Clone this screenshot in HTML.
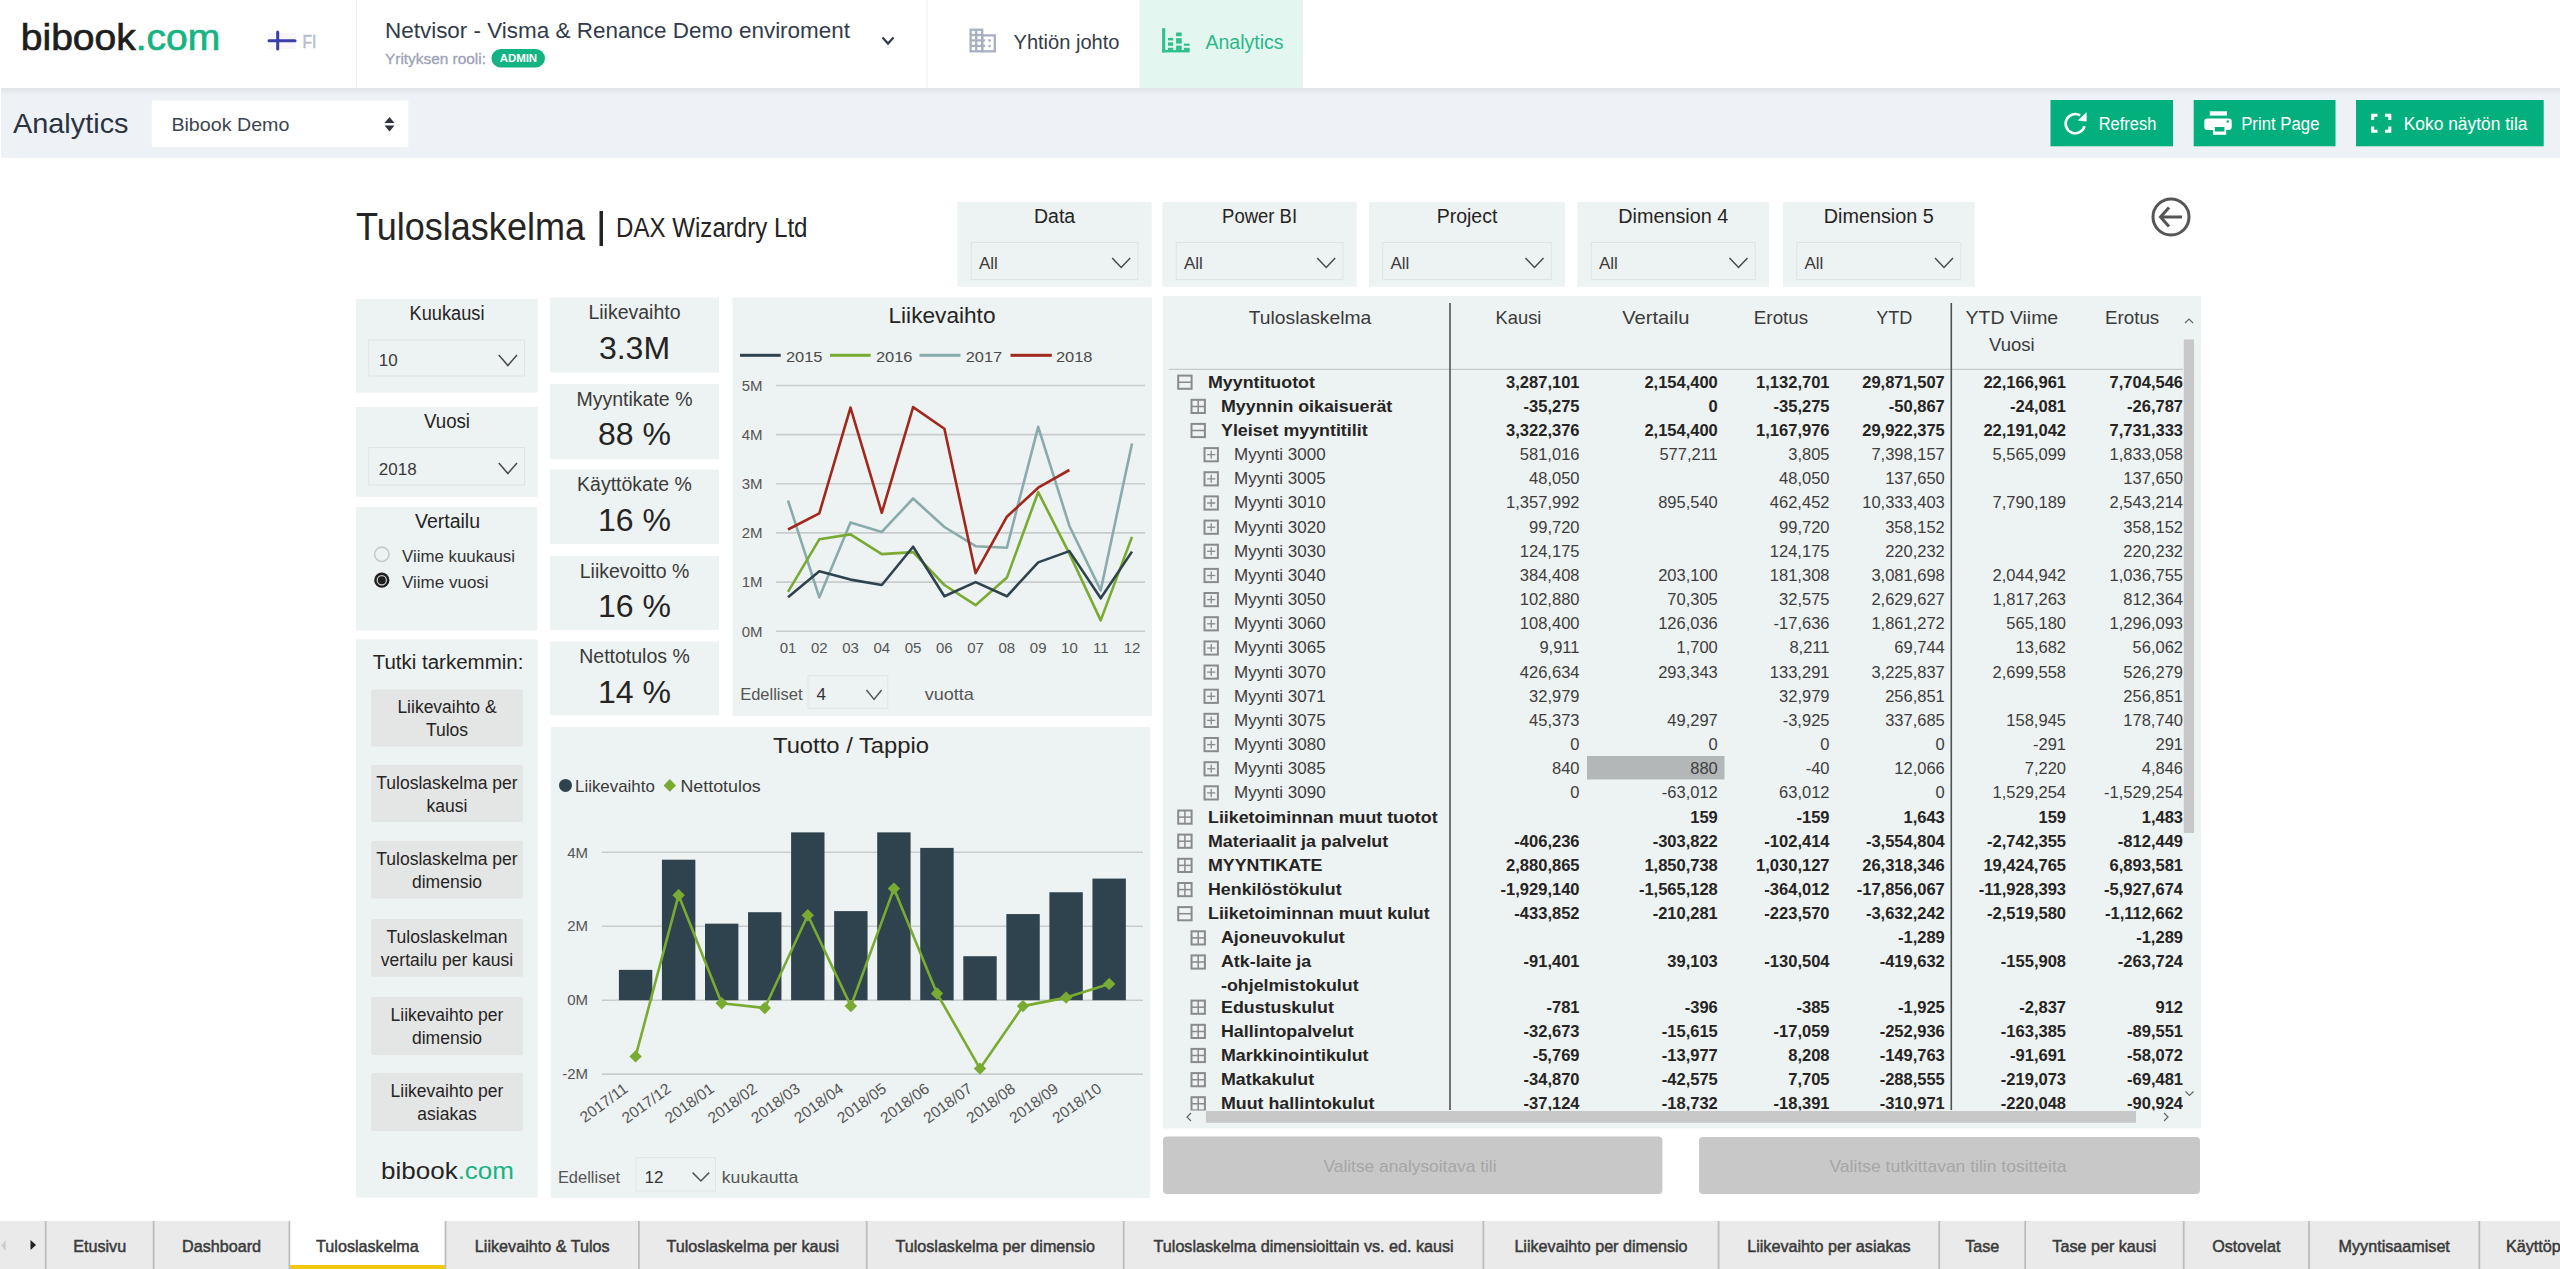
<!DOCTYPE html><html><head><meta charset="utf-8"><title>Tuloslaskelma</title><style>html,body{margin:0;padding:0;background:#fff;overflow:hidden;width:2560px;height:1269px}svg{display:block;font-family:"Liberation Sans",sans-serif}</style></head><body><svg width="2560" height="1269" viewBox="0 0 2560 1269" font-family="Liberation Sans, sans-serif"><rect x="0" y="0" width="2560" height="88" fill="#ffffff" />
<defs><linearGradient id="shd" x1="0" y1="0" x2="0" y2="1"><stop offset="0" stop-color="#e0e3e8"/><stop offset="1" stop-color="#eef1f5"/></linearGradient></defs>
<rect x="1" y="88" width="2559" height="70" fill="#eef1f5" />
<rect x="1" y="88" width="2559" height="7" fill="url(#shd)" />
<text x="20.8" y="50" font-size="37" fill="#1e1e1e" stroke="#1e1e1e" stroke-width="0.7" textLength="199.5" lengthAdjust="spacingAndGlyphs">bibook<tspan fill="#16b383" stroke="#16b383">.com</tspan></text>
<rect x="268" y="33" width="28" height="16" fill="#f7f7fa" />
<line x1="269" y1="40.8" x2="295" y2="40.8" stroke="#3b3ea6" stroke-width="3" stroke-linecap="round"/>
<line x1="277.7" y1="32" x2="277.7" y2="48.9" stroke="#3b3ea6" stroke-width="3" stroke-linecap="round"/>
<text x="302.5" y="48" font-size="18" fill="#b6bccb" textLength="14" lengthAdjust="spacingAndGlyphs" stroke="#b6bccb" stroke-width="0.5">FI</text>
<rect x="356" y="0" width="1" height="88" fill="#eceef3" />
<rect x="926.5" y="0" width="1.0" height="88" fill="#eceef3" />
<text x="385" y="38" font-size="22" fill="#323b4b" textLength="465" lengthAdjust="spacingAndGlyphs" >Netvisor - Visma &amp; Renance Demo enviroment</text>
<text x="385" y="63.5" font-size="15" fill="#9ca1b6" textLength="101" lengthAdjust="spacingAndGlyphs" stroke="#9ca1b6" stroke-width="0.3">Yrityksen rooli:</text>
<rect x="491.5" y="49" width="53.5" height="18.5" rx="9.2" fill="#13b383"/>
<text x="518.4" y="62.2" font-size="10.5" fill="#ffffff" text-anchor="middle" font-weight="bold" textLength="37.5" lengthAdjust="spacingAndGlyphs" >ADMIN</text>
<polyline points="882.5,37.5 888,43.5 893.5,37.5" fill="none" stroke="#333a45" stroke-width="2.2"/>
<g fill="none" stroke="#a9afc3" stroke-width="2.3"><rect x="970.6" y="29.7" width="11.6" height="21.6"/><rect x="982.2" y="35.4" width="12.6" height="15.9"/><line x1="976.2" y1="29.7" x2="976.2" y2="51.3"/><line x1="970.6" y1="35" x2="982.2" y2="35"/><line x1="970.6" y1="40.4" x2="985" y2="40.4"/><line x1="970.6" y1="45.9" x2="985" y2="45.9"/></g><g fill="#a9afc3"><circle cx="989.6" cy="40.4" r="1.3"/><circle cx="989.6" cy="46.1" r="1.3"/></g>
<text x="1013.5" y="49" font-size="19.5" fill="#343c4a" textLength="106" lengthAdjust="spacingAndGlyphs" >Yhtiön johto</text>
<rect x="1139.5" y="0" width="163.5" height="88" fill="#e4f6f0" />
<g fill="#2fc08c"><rect x="1162.1" y="28.2" width="3.1" height="24.2"/><rect x="1162.1" y="50" width="27.5" height="2.4"/><rect x="1168" y="37.9" width="5.2" height="2.5"/><rect x="1168" y="42.4" width="5.2" height="3.4"/><rect x="1168" y="47.8" width="5.2" height="2.4"/><rect x="1176.1" y="32.5" width="5.6" height="3.7"/><rect x="1176.1" y="38.2" width="5.6" height="5.4"/><rect x="1176.1" y="45.6" width="5.6" height="4.6"/><rect x="1183.9" y="43.6" width="5.7" height="2.2"/><rect x="1183.9" y="47.8" width="5.7" height="2.4"/></g>
<text x="1205.5" y="49" font-size="19.5" fill="#2ab98a" textLength="78" lengthAdjust="spacingAndGlyphs" >Analytics</text>
<text x="13" y="133.3" font-size="28.5" fill="#2a3441" textLength="115.5" lengthAdjust="spacingAndGlyphs" >Analytics</text>
<rect x="151.7" y="100.5" width="256.7" height="46.7" fill="#ffffff" />
<text x="171.4" y="131.2" font-size="19" fill="#3a4552" textLength="118" lengthAdjust="spacingAndGlyphs" >Bibook Demo</text>
<polygon points="384.5,123 389.5,117 394.5,123" fill="#2d3440"/><polygon points="384.5,125.5 389.5,131.5 394.5,125.5" fill="#2d3440"/>
<rect x="2050.5" y="100" width="122.5" height="46.3" fill="#04af7e" />
<text x="2098.7" y="130" font-size="18" fill="#ffffff" textLength="57.6" lengthAdjust="spacingAndGlyphs" >Refresh</text>
<rect x="2193.7" y="100" width="141.8" height="46.3" fill="#04af7e" />
<text x="2241.2" y="130" font-size="18" fill="#ffffff" textLength="78.3" lengthAdjust="spacingAndGlyphs" >Print Page</text>
<rect x="2356" y="100" width="187.7" height="46.3" fill="#04af7e" />
<text x="2403.7" y="130" font-size="18" fill="#ffffff" textLength="123.8" lengthAdjust="spacingAndGlyphs" >Koko näytön tila</text>
<path d="M2084.5,126.1 A9.6,9.6 0 1 1 2080.1,115.4" fill="none" stroke="#fff" stroke-width="2.6"/><polygon points="2086.6,112.2 2086.6,121.6 2077.8,120.6" fill="#fff"/>
<g fill="#fff"><rect x="2209.8" y="111.3" width="17.2" height="4.3"/><rect x="2204.3" y="118.4" width="27.4" height="11.7" rx="3"/><rect x="2213" y="125.8" width="13.2" height="9"/></g><rect x="2214.8" y="127" width="9.6" height="4.5" fill="#04af7e"/><circle cx="2227.7" cy="121.5" r="1.2" fill="#04af7e"/>
<g fill="none" stroke="#fff" stroke-width="3"><polyline points="2372.7,120 2372.7,115.2 2377.5,115.2"/><polyline points="2385,115.2 2389.8,115.2 2389.8,120"/><polyline points="2372.7,126.5 2372.7,131.2 2377.5,131.2"/><polyline points="2385,131.2 2389.8,131.2 2389.8,126.5"/></g>
<text x="356" y="239.5" font-size="38" fill="#252423" textLength="229" lengthAdjust="spacingAndGlyphs" >Tuloslaskelma</text>
<rect x="599.5" y="211" width="3.5" height="35" fill="#252423" />
<text x="616" y="237" font-size="27" fill="#252423" textLength="191.5" lengthAdjust="spacingAndGlyphs" >DAX Wizardry Ltd</text>
<rect x="957.5" y="202" width="194.2" height="84.7" fill="#edf2f2" />
<text x="1054.6" y="223" font-size="20" fill="#252423" text-anchor="middle" textLength="41.2" lengthAdjust="spacingAndGlyphs" >Data</text>
<rect x="971.25" y="242.5" width="166.7" height="37" fill="none" stroke="#dfe4e4" stroke-width="1"/>
<text x="979.0" y="268.8" font-size="17" fill="#3a3a3a" >All</text>
<polyline points="1112.2,258 1121.2,267.5 1130.2,258" fill="none" stroke="#4a4a4a" stroke-width="1.5"/>
<rect x="1162.5" y="202" width="194.2" height="84.7" fill="#edf2f2" />
<text x="1259.6" y="223" font-size="20" fill="#252423" text-anchor="middle" textLength="75" lengthAdjust="spacingAndGlyphs" >Power BI</text>
<rect x="1176.25" y="242.5" width="166.7" height="37" fill="none" stroke="#dfe4e4" stroke-width="1"/>
<text x="1184.0" y="268.8" font-size="17" fill="#3a3a3a" >All</text>
<polyline points="1317.2,258 1326.2,267.5 1335.2,258" fill="none" stroke="#4a4a4a" stroke-width="1.5"/>
<rect x="1369" y="202" width="196" height="84.7" fill="#edf2f2" />
<text x="1467.0" y="223" font-size="20" fill="#252423" text-anchor="middle" textLength="60.7" lengthAdjust="spacingAndGlyphs" >Project</text>
<rect x="1382.75" y="242.5" width="168.5" height="37" fill="none" stroke="#dfe4e4" stroke-width="1"/>
<text x="1390.5" y="268.8" font-size="17" fill="#3a3a3a" >All</text>
<polyline points="1525.5,258 1534.5,267.5 1543.5,258" fill="none" stroke="#4a4a4a" stroke-width="1.5"/>
<rect x="1577.5" y="202" width="191.5" height="84.7" fill="#edf2f2" />
<text x="1673.25" y="223" font-size="20" fill="#252423" text-anchor="middle" textLength="110" lengthAdjust="spacingAndGlyphs" >Dimension 4</text>
<rect x="1591.25" y="242.5" width="164.0" height="37" fill="none" stroke="#dfe4e4" stroke-width="1"/>
<text x="1599.0" y="268.8" font-size="17" fill="#3a3a3a" >All</text>
<polyline points="1729.5,258 1738.5,267.5 1747.5,258" fill="none" stroke="#4a4a4a" stroke-width="1.5"/>
<rect x="1783" y="202" width="191.5" height="84.7" fill="#edf2f2" />
<text x="1878.75" y="223" font-size="20" fill="#252423" text-anchor="middle" textLength="110" lengthAdjust="spacingAndGlyphs" >Dimension 5</text>
<rect x="1796.75" y="242.5" width="164.0" height="37" fill="none" stroke="#dfe4e4" stroke-width="1"/>
<text x="1804.5" y="268.8" font-size="17" fill="#3a3a3a" >All</text>
<polyline points="1935.0,258 1944.0,267.5 1953.0,258" fill="none" stroke="#4a4a4a" stroke-width="1.5"/>
<circle cx="2171" cy="217" r="18" fill="none" stroke="#555" stroke-width="3"/><polyline points="2169,207.5 2160.5,217 2169,226.5" fill="none" stroke="#555" stroke-width="3"/><line x1="2161" y1="217" x2="2182" y2="217" stroke="#555" stroke-width="3"/>
<rect x="356" y="299" width="181.6" height="93.7" fill="#edf2f2" />
<text x="447" y="319.5" font-size="20" fill="#252423" text-anchor="middle" textLength="75" lengthAdjust="spacingAndGlyphs" >Kuukausi</text>
<rect x="368.8" y="340" width="155.7" height="36" fill="none" stroke="#dfe4e4"/>
<text x="378.8" y="366" font-size="17" fill="#3a3a3a" >10</text>
<polyline points="498.8,355 507.9,365.5 517,355" fill="none" stroke="#4a4a4a" stroke-width="1.5"/>
<rect x="356" y="407" width="181.6" height="89.8" fill="#edf2f2" />
<text x="447" y="428.2" font-size="20" fill="#252423" text-anchor="middle" textLength="46" lengthAdjust="spacingAndGlyphs" >Vuosi</text>
<rect x="368.8" y="447.6" width="155.7" height="37.4" fill="none" stroke="#dfe4e4"/>
<text x="378.8" y="474.8" font-size="17" fill="#3a3a3a" >2018</text>
<polyline points="498.8,463 507.9,473.5 517,463" fill="none" stroke="#4a4a4a" stroke-width="1.5"/>
<rect x="356" y="507" width="181.3" height="123.5" fill="#edf2f2" />
<text x="447.5" y="527.7" font-size="19.5" fill="#252423" text-anchor="middle" >Vertailu</text>
<circle cx="381.8" cy="554.3" r="7.2" fill="none" stroke="#c6c9c9" stroke-width="1.6"/>
<circle cx="381.8" cy="580.2" r="7.6" fill="#1f1f1f"/><circle cx="381.8" cy="580.2" r="4.6" fill="none" stroke="#cfcfcf" stroke-width="1.2"/>
<text x="402" y="562" font-size="17" fill="#333333" textLength="113" lengthAdjust="spacingAndGlyphs" >Viime kuukausi</text>
<text x="402" y="587.7" font-size="17" fill="#333333" >Viime vuosi</text>
<rect x="356" y="639.5" width="181.6" height="558.0" fill="#edf2f2" />
<text x="372.7" y="668.9" font-size="20" fill="#252423" textLength="150.7" lengthAdjust="spacingAndGlyphs" >Tutki tarkemmin:</text>
<rect x="371" y="689.5" width="152" height="57.1" rx="2" fill="#e4e5e5"/>
<text x="447" y="713.0" font-size="17.5" fill="#252423" text-anchor="middle" >Liikevaihto &amp;</text>
<text x="447" y="736.0" font-size="17.5" fill="#252423" text-anchor="middle" >Tulos</text>
<rect x="371" y="765" width="152" height="57" rx="2" fill="#e4e5e5"/>
<text x="447" y="788.5" font-size="17.5" fill="#252423" text-anchor="middle" >Tuloslaskelma per</text>
<text x="447" y="811.5" font-size="17.5" fill="#252423" text-anchor="middle" >kausi</text>
<rect x="371" y="841" width="152" height="57.5" rx="2" fill="#e4e5e5"/>
<text x="447" y="864.5" font-size="17.5" fill="#252423" text-anchor="middle" >Tuloslaskelma per</text>
<text x="447" y="887.5" font-size="17.5" fill="#252423" text-anchor="middle" >dimensio</text>
<rect x="371" y="919" width="152" height="57.7" rx="2" fill="#e4e5e5"/>
<text x="447" y="942.5" font-size="17.5" fill="#252423" text-anchor="middle" >Tuloslaskelman</text>
<text x="447" y="965.5" font-size="17.5" fill="#252423" text-anchor="middle" >vertailu per kausi</text>
<rect x="371" y="997" width="152" height="58" rx="2" fill="#e4e5e5"/>
<text x="447" y="1020.5" font-size="17.5" fill="#252423" text-anchor="middle" >Liikevaihto per</text>
<text x="447" y="1043.5" font-size="17.5" fill="#252423" text-anchor="middle" >dimensio</text>
<rect x="371" y="1073" width="152" height="58" rx="2" fill="#e4e5e5"/>
<text x="447" y="1096.5" font-size="17.5" fill="#252423" text-anchor="middle" >Liikevaihto per</text>
<text x="447" y="1119.5" font-size="17.5" fill="#252423" text-anchor="middle" >asiakas</text>
<text x="381" y="1179" font-size="24" fill="#252423" textLength="133" lengthAdjust="spacingAndGlyphs">bibook<tspan fill="#16b383">.com</tspan></text>
<rect x="550" y="297.5" width="169" height="74.9" fill="#edf2f2" />
<text x="634.5" y="319.0" font-size="19.5" fill="#3a3a3a" text-anchor="middle" >Liikevaihto</text>
<text x="634.5" y="358.8" font-size="32" fill="#252423" text-anchor="middle" >3.3M</text>
<rect x="550" y="384" width="169" height="74.8" fill="#edf2f2" />
<text x="634.5" y="405.5" font-size="19.5" fill="#3a3a3a" text-anchor="middle" >Myyntikate %</text>
<text x="634.5" y="445.3" font-size="32" fill="#252423" text-anchor="middle" >88 %</text>
<rect x="550" y="469.7" width="169" height="74.3" fill="#edf2f2" />
<text x="634.5" y="491.2" font-size="19.5" fill="#3a3a3a" text-anchor="middle" >Käyttökate %</text>
<text x="634.5" y="531.0" font-size="32" fill="#252423" text-anchor="middle" >16 %</text>
<rect x="550" y="556" width="169" height="74" fill="#edf2f2" />
<text x="634.5" y="577.5" font-size="19.5" fill="#3a3a3a" text-anchor="middle" >Liikevoitto %</text>
<text x="634.5" y="617.3" font-size="32" fill="#252423" text-anchor="middle" >16 %</text>
<rect x="550" y="641.5" width="169" height="73.5" fill="#edf2f2" />
<text x="634.5" y="663.0" font-size="19.5" fill="#3a3a3a" text-anchor="middle" >Nettotulos %</text>
<text x="634.5" y="702.8" font-size="32" fill="#252423" text-anchor="middle" >14 %</text>
<rect x="732.5" y="297.5" width="419.5" height="418.3" fill="#edf2f2" />
<text x="942" y="322.9" font-size="21.5" fill="#252423" text-anchor="middle" textLength="107" lengthAdjust="spacingAndGlyphs" >Liikevaihto</text>
<rect x="740" y="353.8" width="40.7" height="3.0" fill="#2f434e" />
<text x="786" y="361.5" font-size="15.5" fill="#4a4a4a" textLength="36.5" lengthAdjust="spacingAndGlyphs" >2015</text>
<rect x="830" y="353.8" width="40.6" height="3.0" fill="#79ab32" />
<text x="876" y="361.5" font-size="15.5" fill="#4a4a4a" textLength="36.5" lengthAdjust="spacingAndGlyphs" >2016</text>
<rect x="919.5" y="353.8" width="41.0" height="3.0" fill="#8aabab" />
<text x="965.7" y="361.5" font-size="15.5" fill="#4a4a4a" textLength="36.5" lengthAdjust="spacingAndGlyphs" >2017</text>
<rect x="1010.5" y="353.8" width="41.3" height="3.0" fill="#a0281d" />
<text x="1056" y="361.5" font-size="15.5" fill="#4a4a4a" textLength="36.5" lengthAdjust="spacingAndGlyphs" >2018</text>
<line x1="776" y1="631.2" x2="1145" y2="631.2" stroke="#c9cccc" stroke-width="1.6"/>
<text x="762.5" y="636.5" font-size="15" fill="#555555" text-anchor="end" >0M</text>
<line x1="776" y1="582.1" x2="1145" y2="582.1" stroke="#c9cccc" stroke-width="1.6"/>
<text x="762.5" y="587.36" font-size="15" fill="#555555" text-anchor="end" >1M</text>
<line x1="776" y1="532.9" x2="1145" y2="532.9" stroke="#c9cccc" stroke-width="1.6"/>
<text x="762.5" y="538.22" font-size="15" fill="#555555" text-anchor="end" >2M</text>
<line x1="776" y1="483.8" x2="1145" y2="483.8" stroke="#c9cccc" stroke-width="1.6"/>
<text x="762.5" y="489.08000000000004" font-size="15" fill="#555555" text-anchor="end" >3M</text>
<line x1="776" y1="434.6" x2="1145" y2="434.6" stroke="#c9cccc" stroke-width="1.6"/>
<text x="762.5" y="439.94000000000005" font-size="15" fill="#555555" text-anchor="end" >4M</text>
<line x1="776" y1="385.5" x2="1145" y2="385.5" stroke="#c9cccc" stroke-width="1.6"/>
<text x="762.5" y="390.80000000000007" font-size="15" fill="#555555" text-anchor="end" >5M</text>
<text x="788.0" y="653.3" font-size="15" fill="#555555" text-anchor="middle" >01</text>
<text x="819.27" y="653.3" font-size="15" fill="#555555" text-anchor="middle" >02</text>
<text x="850.54" y="653.3" font-size="15" fill="#555555" text-anchor="middle" >03</text>
<text x="881.81" y="653.3" font-size="15" fill="#555555" text-anchor="middle" >04</text>
<text x="913.08" y="653.3" font-size="15" fill="#555555" text-anchor="middle" >05</text>
<text x="944.35" y="653.3" font-size="15" fill="#555555" text-anchor="middle" >06</text>
<text x="975.62" y="653.3" font-size="15" fill="#555555" text-anchor="middle" >07</text>
<text x="1006.89" y="653.3" font-size="15" fill="#555555" text-anchor="middle" >08</text>
<text x="1038.16" y="653.3" font-size="15" fill="#555555" text-anchor="middle" >09</text>
<text x="1069.43" y="653.3" font-size="15" fill="#555555" text-anchor="middle" >10</text>
<text x="1100.7" y="653.3" font-size="15" fill="#555555" text-anchor="middle" >11</text>
<text x="1131.97" y="653.3" font-size="15" fill="#555555" text-anchor="middle" >12</text>
<polyline points="788.0,500.5 819.3,597.3 850.5,522.6 881.8,531.9 913.1,498.5 944.4,527.0 975.6,546.2 1006.9,547.7 1038.2,426.8 1069.4,526.0 1100.7,590.4 1132.0,443.5" fill="none" stroke="#8aabab" stroke-width="2.6" stroke-linejoin="round"/>
<polyline points="788.0,591.9 819.3,539.3 850.5,534.4 881.8,554.1 913.1,552.1 944.4,585.0 975.6,605.2 1006.9,577.6 1038.2,492.1 1069.4,553.6 1100.7,620.4 1132.0,536.9" fill="none" stroke="#79ab32" stroke-width="2.6" stroke-linejoin="round"/>
<polyline points="788.0,597.3 819.3,571.2 850.5,579.6 881.8,585.0 913.1,546.7 944.4,596.3 975.6,582.1 1006.9,596.3 1038.2,562.4 1069.4,551.1 1100.7,598.3 1132.0,551.6" fill="none" stroke="#2f434e" stroke-width="2.6" stroke-linejoin="round"/>
<polyline points="788.0,529.5 819.3,513.3 850.5,407.6 881.8,512.8 913.1,407.1 944.4,428.7 975.6,573.2 1006.9,516.7 1038.2,487.7 1069.4,470.0" fill="none" stroke="#a0281d" stroke-width="2.6" stroke-linejoin="round"/>
<text x="740.2" y="700.2" font-size="17" fill="#555555" textLength="62.3" lengthAdjust="spacingAndGlyphs" >Edelliset</text>
<rect x="808" y="675.6" width="79.8" height="32.8" fill="none" stroke="#e1e5e5"/>
<text x="816.5" y="700.2" font-size="17" fill="#333333" >4</text>
<polyline points="866.5,690 874.05,699.4 881.6,690" fill="none" stroke="#555" stroke-width="1.5"/>
<text x="924.7" y="700.2" font-size="17" fill="#555555" textLength="49.2" lengthAdjust="spacingAndGlyphs" >vuotta</text>
<rect x="550.8" y="727" width="599.2" height="471" fill="#edf2f2" />
<text x="851" y="752.6" font-size="22" fill="#252423" text-anchor="middle" textLength="156" lengthAdjust="spacingAndGlyphs" >Tuotto / Tappio</text>
<circle cx="565.5" cy="785.4" r="6.5" fill="#2f434e"/>
<text x="575" y="791.7" font-size="17" fill="#3a3a3a" textLength="79.8" lengthAdjust="spacingAndGlyphs" >Liikevaihto</text>
<polygon points="669.8,779 676,785.4 669.8,791.8 663.6,785.4" fill="#79ab32"/>
<text x="680.5" y="791.7" font-size="17" fill="#3a3a3a" textLength="80.2" lengthAdjust="spacingAndGlyphs" >Nettotulos</text>
<line x1="601.7" y1="852.3" x2="1143" y2="852.3" stroke="#c9cccc" stroke-width="1.6"/>
<text x="588" y="857.5200000000001" font-size="15" fill="#555555" text-anchor="end" >4M</text>
<line x1="601.7" y1="926.3" x2="1143" y2="926.3" stroke="#c9cccc" stroke-width="1.6"/>
<text x="588" y="931.46" font-size="15" fill="#555555" text-anchor="end" >2M</text>
<line x1="601.7" y1="1000.2" x2="1143" y2="1000.2" stroke="#c9cccc" stroke-width="1.6"/>
<text x="588" y="1005.4000000000001" font-size="15" fill="#555555" text-anchor="end" >0M</text>
<line x1="601.7" y1="1074.1" x2="1143" y2="1074.1" stroke="#c9cccc" stroke-width="1.6"/>
<text x="588" y="1079.3400000000001" font-size="15" fill="#555555" text-anchor="end" >-2M</text>
<rect x="618.9" y="969.88" width="33.4" height="30.32" fill="#2f434e" />
<rect x="661.95" y="859.71" width="33.4" height="140.49" fill="#2f434e" />
<rect x="705.0" y="923.67" width="33.4" height="76.53" fill="#2f434e" />
<rect x="748.05" y="912.21" width="33.4" height="87.99" fill="#2f434e" />
<rect x="791.1" y="832.36" width="33.4" height="167.84" fill="#2f434e" />
<rect x="834.15" y="911.1" width="33.4" height="89.1" fill="#2f434e" />
<rect x="877.2" y="832.36" width="33.4" height="167.84" fill="#2f434e" />
<rect x="920.25" y="847.88" width="33.4" height="152.32" fill="#2f434e" />
<rect x="963.3" y="956.21" width="33.4" height="43.99" fill="#2f434e" />
<rect x="1006.35" y="914.06" width="33.4" height="86.14" fill="#2f434e" />
<rect x="1049.4" y="892.25" width="33.4" height="107.95" fill="#2f434e" />
<rect x="1092.45" y="878.57" width="33.4" height="121.63" fill="#2f434e" />
<polyline points="635.6,1056.4 678.6,895.2 721.7,1003.2 764.8,1008.0 807.8,915.2 850.9,1006.1 893.9,888.6 937.0,993.5 980.0,1068.6 1023.0,1006.1 1066.1,997.6 1109.2,983.9" fill="none" stroke="#79ab32" stroke-width="2.6" stroke-linejoin="round"/>
<polygon points="635.6,1050.2 641.8,1056.4 635.6,1062.6 629.4,1056.4" fill="#79ab32"/>
<polygon points="678.6,889.0 684.9,895.2 678.6,901.4 672.4,895.2" fill="#79ab32"/>
<polygon points="721.7,997.0 727.9,1003.2 721.7,1009.4 715.5,1003.2" fill="#79ab32"/>
<polygon points="764.8,1001.8 771.0,1008.0 764.8,1014.2 758.5,1008.0" fill="#79ab32"/>
<polygon points="807.8,909.0 814.0,915.2 807.8,921.4 801.6,915.2" fill="#79ab32"/>
<polygon points="850.9,999.9 857.1,1006.1 850.9,1012.3 844.6,1006.1" fill="#79ab32"/>
<polygon points="893.9,882.4 900.1,888.6 893.9,894.8 887.7,888.6" fill="#79ab32"/>
<polygon points="937.0,987.3 943.2,993.5 937.0,999.7 930.8,993.5" fill="#79ab32"/>
<polygon points="980.0,1062.4 986.2,1068.6 980.0,1074.8 973.8,1068.6" fill="#79ab32"/>
<polygon points="1023.0,999.9 1029.2,1006.1 1023.0,1012.3 1016.8,1006.1" fill="#79ab32"/>
<polygon points="1066.1,991.4 1072.3,997.6 1066.1,1003.8 1059.9,997.6" fill="#79ab32"/>
<polygon points="1109.2,977.7 1115.4,983.9 1109.2,990.1 1103.0,983.9" fill="#79ab32"/>
<text x="629.1" y="1091" font-size="15.5" fill="#555555" text-anchor="end" transform="rotate(-36 629.1 1091)">2017/11</text>
<text x="672.1" y="1091" font-size="15.5" fill="#555555" text-anchor="end" transform="rotate(-36 672.1 1091)">2017/12</text>
<text x="715.2" y="1091" font-size="15.5" fill="#555555" text-anchor="end" transform="rotate(-36 715.2 1091)">2018/01</text>
<text x="758.2" y="1091" font-size="15.5" fill="#555555" text-anchor="end" transform="rotate(-36 758.2 1091)">2018/02</text>
<text x="801.3" y="1091" font-size="15.5" fill="#555555" text-anchor="end" transform="rotate(-36 801.3 1091)">2018/03</text>
<text x="844.4" y="1091" font-size="15.5" fill="#555555" text-anchor="end" transform="rotate(-36 844.4 1091)">2018/04</text>
<text x="887.4" y="1091" font-size="15.5" fill="#555555" text-anchor="end" transform="rotate(-36 887.4 1091)">2018/05</text>
<text x="930.5" y="1091" font-size="15.5" fill="#555555" text-anchor="end" transform="rotate(-36 930.5 1091)">2018/06</text>
<text x="973.5" y="1091" font-size="15.5" fill="#555555" text-anchor="end" transform="rotate(-36 973.5 1091)">2018/07</text>
<text x="1016.5" y="1091" font-size="15.5" fill="#555555" text-anchor="end" transform="rotate(-36 1016.5 1091)">2018/08</text>
<text x="1059.6" y="1091" font-size="15.5" fill="#555555" text-anchor="end" transform="rotate(-36 1059.6 1091)">2018/09</text>
<text x="1102.7" y="1091" font-size="15.5" fill="#555555" text-anchor="end" transform="rotate(-36 1102.7 1091)">2018/10</text>
<text x="557.9" y="1182.5" font-size="17" fill="#555555" textLength="62.2" lengthAdjust="spacingAndGlyphs" >Edelliset</text>
<rect x="636" y="1157.6" width="79.5" height="33.4" fill="none" stroke="#e1e5e5"/>
<text x="644.6" y="1182.5" font-size="17" fill="#333333" >12</text>
<polyline points="692.6,1172.6 700.9000000000001,1181 709.2,1172.6" fill="none" stroke="#555" stroke-width="1.5"/>
<text x="721.8" y="1182.5" font-size="17" fill="#555555" textLength="76.4" lengthAdjust="spacingAndGlyphs" >kuukautta</text>
<rect x="1163" y="296" width="1038" height="832.4" fill="#edf2f2" />
<text x="1310" y="324" font-size="19" fill="#3a3a3a" text-anchor="middle" textLength="122.4" lengthAdjust="spacingAndGlyphs" >Tuloslaskelma</text>
<text x="1518.5" y="324" font-size="19" fill="#3a3a3a" text-anchor="middle" textLength="45.8" lengthAdjust="spacingAndGlyphs" >Kausi</text>
<text x="1655.8" y="324" font-size="19" fill="#3a3a3a" text-anchor="middle" textLength="67.1" lengthAdjust="spacingAndGlyphs" >Vertailu</text>
<text x="1781" y="324" font-size="19" fill="#3a3a3a" text-anchor="middle" textLength="54.3" lengthAdjust="spacingAndGlyphs" >Erotus</text>
<text x="1894.3" y="324" font-size="19" fill="#3a3a3a" text-anchor="middle" textLength="36.2" lengthAdjust="spacingAndGlyphs" >YTD</text>
<text x="2011.9" y="324" font-size="19" fill="#3a3a3a" text-anchor="middle" textLength="92.6" lengthAdjust="spacingAndGlyphs" >YTD Viime</text>
<text x="2011.9" y="350.6" font-size="19" fill="#3a3a3a" text-anchor="middle" textLength="45.7" lengthAdjust="spacingAndGlyphs" >Vuosi</text>
<text x="2132.1" y="324" font-size="19" fill="#3a3a3a" text-anchor="middle" textLength="54.2" lengthAdjust="spacingAndGlyphs" >Erotus</text>
<line x1="1168.8" y1="369.4" x2="2183" y2="369.4" stroke="#c5c9c9" stroke-width="1.3"/>
<defs><clipPath id="tclip"><rect x="1163" y="371" width="1020" height="739.5"/></clipPath></defs>
<g clip-path="url(#tclip)">
<rect x="1587" y="756" width="137.5" height="23.5" fill="#b4b7b7" />
<rect x="1178.2" y="375.6" width="13.4" height="13.2" fill="none" stroke="#8a8a8a" stroke-width="2"/>
<line x1="1178.2" y1="382.2" x2="1191.6000000000001" y2="382.2" stroke="#8a8a8a" stroke-width="1.5"/>
<text x="1208" y="387.6" font-size="16.5" fill="#252423" font-weight="bold" textLength="106.9" lengthAdjust="spacingAndGlyphs" >Myyntituotot</text>
<text x="1579.5" y="387.6" font-size="16.5" fill="#252423" text-anchor="end" font-weight="bold" >3,287,101</text>
<text x="1717.8" y="387.6" font-size="16.5" fill="#252423" text-anchor="end" font-weight="bold" >2,154,400</text>
<text x="1829.5" y="387.6" font-size="16.5" fill="#252423" text-anchor="end" font-weight="bold" >1,132,701</text>
<text x="1944.8" y="387.6" font-size="16.5" fill="#252423" text-anchor="end" font-weight="bold" >29,871,507</text>
<text x="2066" y="387.6" font-size="16.5" fill="#252423" text-anchor="end" font-weight="bold" >22,166,961</text>
<text x="2183" y="387.6" font-size="16.5" fill="#252423" text-anchor="end" font-weight="bold" >7,704,546</text>
<rect x="1191.5" y="399.8" width="13.4" height="13.2" fill="none" stroke="#8a8a8a" stroke-width="2"/>
<line x1="1191.5" y1="406.4" x2="1204.9" y2="406.4" stroke="#8a8a8a" stroke-width="1.5"/>
<line x1="1198.2" y1="399.8" x2="1198.2" y2="413.0" stroke="#8a8a8a" stroke-width="1.5"/>
<text x="1221" y="411.8" font-size="16.5" fill="#252423" font-weight="bold" textLength="171.3" lengthAdjust="spacingAndGlyphs" >Myynnin oikaisuerät</text>
<text x="1579.5" y="411.8" font-size="16.5" fill="#252423" text-anchor="end" font-weight="bold" >-35,275</text>
<text x="1717.8" y="411.8" font-size="16.5" fill="#252423" text-anchor="end" font-weight="bold" >0</text>
<text x="1829.5" y="411.8" font-size="16.5" fill="#252423" text-anchor="end" font-weight="bold" >-35,275</text>
<text x="1944.8" y="411.8" font-size="16.5" fill="#252423" text-anchor="end" font-weight="bold" >-50,867</text>
<text x="2066" y="411.8" font-size="16.5" fill="#252423" text-anchor="end" font-weight="bold" >-24,081</text>
<text x="2183" y="411.8" font-size="16.5" fill="#252423" text-anchor="end" font-weight="bold" >-26,787</text>
<rect x="1191.5" y="423.9" width="13.4" height="13.2" fill="none" stroke="#8a8a8a" stroke-width="2"/>
<line x1="1191.5" y1="430.5" x2="1204.9" y2="430.5" stroke="#8a8a8a" stroke-width="1.5"/>
<text x="1221" y="435.9" font-size="16.5" fill="#252423" font-weight="bold" textLength="146.6" lengthAdjust="spacingAndGlyphs" >Yleiset myyntitilit</text>
<text x="1579.5" y="435.9" font-size="16.5" fill="#252423" text-anchor="end" font-weight="bold" >3,322,376</text>
<text x="1717.8" y="435.9" font-size="16.5" fill="#252423" text-anchor="end" font-weight="bold" >2,154,400</text>
<text x="1829.5" y="435.9" font-size="16.5" fill="#252423" text-anchor="end" font-weight="bold" >1,167,976</text>
<text x="1944.8" y="435.9" font-size="16.5" fill="#252423" text-anchor="end" font-weight="bold" >29,922,375</text>
<text x="2066" y="435.9" font-size="16.5" fill="#252423" text-anchor="end" font-weight="bold" >22,191,042</text>
<text x="2183" y="435.9" font-size="16.5" fill="#252423" text-anchor="end" font-weight="bold" >7,731,333</text>
<rect x="1204.5" y="448.1" width="13.4" height="13.2" fill="none" stroke="#8a8a8a" stroke-width="2"/>
<line x1="1207.1" y1="454.7" x2="1215.3000000000002" y2="454.7" stroke="#8a8a8a" stroke-width="1.3"/>
<line x1="1211.2" y1="450.7" x2="1211.2" y2="458.7" stroke="#8a8a8a" stroke-width="1.3"/>
<text x="1234" y="460.1" font-size="16.5" fill="#3d3d3d" textLength="91.6" lengthAdjust="spacingAndGlyphs" >Myynti 3000</text>
<text x="1579.5" y="460.1" font-size="16.5" fill="#3d3d3d" text-anchor="end" >581,016</text>
<text x="1717.8" y="460.1" font-size="16.5" fill="#3d3d3d" text-anchor="end" >577,211</text>
<text x="1829.5" y="460.1" font-size="16.5" fill="#3d3d3d" text-anchor="end" >3,805</text>
<text x="1944.8" y="460.1" font-size="16.5" fill="#3d3d3d" text-anchor="end" >7,398,157</text>
<text x="2066" y="460.1" font-size="16.5" fill="#3d3d3d" text-anchor="end" >5,565,099</text>
<text x="2183" y="460.1" font-size="16.5" fill="#3d3d3d" text-anchor="end" >1,833,058</text>
<rect x="1204.5" y="472.2" width="13.4" height="13.2" fill="none" stroke="#8a8a8a" stroke-width="2"/>
<line x1="1207.1" y1="478.8" x2="1215.3000000000002" y2="478.8" stroke="#8a8a8a" stroke-width="1.3"/>
<line x1="1211.2" y1="474.8" x2="1211.2" y2="482.8" stroke="#8a8a8a" stroke-width="1.3"/>
<text x="1234" y="484.2" font-size="16.5" fill="#3d3d3d" textLength="91.6" lengthAdjust="spacingAndGlyphs" >Myynti 3005</text>
<text x="1579.5" y="484.2" font-size="16.5" fill="#3d3d3d" text-anchor="end" >48,050</text>
<text x="1829.5" y="484.2" font-size="16.5" fill="#3d3d3d" text-anchor="end" >48,050</text>
<text x="1944.8" y="484.2" font-size="16.5" fill="#3d3d3d" text-anchor="end" >137,650</text>
<text x="2183" y="484.2" font-size="16.5" fill="#3d3d3d" text-anchor="end" >137,650</text>
<rect x="1204.5" y="496.4" width="13.4" height="13.2" fill="none" stroke="#8a8a8a" stroke-width="2"/>
<line x1="1207.1" y1="503.0" x2="1215.3000000000002" y2="503.0" stroke="#8a8a8a" stroke-width="1.3"/>
<line x1="1211.2" y1="499.0" x2="1211.2" y2="507.0" stroke="#8a8a8a" stroke-width="1.3"/>
<text x="1234" y="508.4" font-size="16.5" fill="#3d3d3d" textLength="91.6" lengthAdjust="spacingAndGlyphs" >Myynti 3010</text>
<text x="1579.5" y="508.4" font-size="16.5" fill="#3d3d3d" text-anchor="end" >1,357,992</text>
<text x="1717.8" y="508.4" font-size="16.5" fill="#3d3d3d" text-anchor="end" >895,540</text>
<text x="1829.5" y="508.4" font-size="16.5" fill="#3d3d3d" text-anchor="end" >462,452</text>
<text x="1944.8" y="508.4" font-size="16.5" fill="#3d3d3d" text-anchor="end" >10,333,403</text>
<text x="2066" y="508.4" font-size="16.5" fill="#3d3d3d" text-anchor="end" >7,790,189</text>
<text x="2183" y="508.4" font-size="16.5" fill="#3d3d3d" text-anchor="end" >2,543,214</text>
<rect x="1204.5" y="520.6" width="13.4" height="13.2" fill="none" stroke="#8a8a8a" stroke-width="2"/>
<line x1="1207.1" y1="527.2" x2="1215.3000000000002" y2="527.2" stroke="#8a8a8a" stroke-width="1.3"/>
<line x1="1211.2" y1="523.2" x2="1211.2" y2="531.2" stroke="#8a8a8a" stroke-width="1.3"/>
<text x="1234" y="532.6" font-size="16.5" fill="#3d3d3d" textLength="91.6" lengthAdjust="spacingAndGlyphs" >Myynti 3020</text>
<text x="1579.5" y="532.6" font-size="16.5" fill="#3d3d3d" text-anchor="end" >99,720</text>
<text x="1829.5" y="532.6" font-size="16.5" fill="#3d3d3d" text-anchor="end" >99,720</text>
<text x="1944.8" y="532.6" font-size="16.5" fill="#3d3d3d" text-anchor="end" >358,152</text>
<text x="2183" y="532.6" font-size="16.5" fill="#3d3d3d" text-anchor="end" >358,152</text>
<rect x="1204.5" y="544.7" width="13.4" height="13.2" fill="none" stroke="#8a8a8a" stroke-width="2"/>
<line x1="1207.1" y1="551.3" x2="1215.3000000000002" y2="551.3" stroke="#8a8a8a" stroke-width="1.3"/>
<line x1="1211.2" y1="547.3" x2="1211.2" y2="555.3" stroke="#8a8a8a" stroke-width="1.3"/>
<text x="1234" y="556.7" font-size="16.5" fill="#3d3d3d" textLength="91.6" lengthAdjust="spacingAndGlyphs" >Myynti 3030</text>
<text x="1579.5" y="556.7" font-size="16.5" fill="#3d3d3d" text-anchor="end" >124,175</text>
<text x="1829.5" y="556.7" font-size="16.5" fill="#3d3d3d" text-anchor="end" >124,175</text>
<text x="1944.8" y="556.7" font-size="16.5" fill="#3d3d3d" text-anchor="end" >220,232</text>
<text x="2183" y="556.7" font-size="16.5" fill="#3d3d3d" text-anchor="end" >220,232</text>
<rect x="1204.5" y="568.9" width="13.4" height="13.2" fill="none" stroke="#8a8a8a" stroke-width="2"/>
<line x1="1207.1" y1="575.5" x2="1215.3000000000002" y2="575.5" stroke="#8a8a8a" stroke-width="1.3"/>
<line x1="1211.2" y1="571.5" x2="1211.2" y2="579.5" stroke="#8a8a8a" stroke-width="1.3"/>
<text x="1234" y="580.9" font-size="16.5" fill="#3d3d3d" textLength="91.6" lengthAdjust="spacingAndGlyphs" >Myynti 3040</text>
<text x="1579.5" y="580.9" font-size="16.5" fill="#3d3d3d" text-anchor="end" >384,408</text>
<text x="1717.8" y="580.9" font-size="16.5" fill="#3d3d3d" text-anchor="end" >203,100</text>
<text x="1829.5" y="580.9" font-size="16.5" fill="#3d3d3d" text-anchor="end" >181,308</text>
<text x="1944.8" y="580.9" font-size="16.5" fill="#3d3d3d" text-anchor="end" >3,081,698</text>
<text x="2066" y="580.9" font-size="16.5" fill="#3d3d3d" text-anchor="end" >2,044,942</text>
<text x="2183" y="580.9" font-size="16.5" fill="#3d3d3d" text-anchor="end" >1,036,755</text>
<rect x="1204.5" y="593.0" width="13.4" height="13.2" fill="none" stroke="#8a8a8a" stroke-width="2"/>
<line x1="1207.1" y1="599.6" x2="1215.3000000000002" y2="599.6" stroke="#8a8a8a" stroke-width="1.3"/>
<line x1="1211.2" y1="595.6" x2="1211.2" y2="603.6" stroke="#8a8a8a" stroke-width="1.3"/>
<text x="1234" y="605.0" font-size="16.5" fill="#3d3d3d" textLength="91.6" lengthAdjust="spacingAndGlyphs" >Myynti 3050</text>
<text x="1579.5" y="605.0" font-size="16.5" fill="#3d3d3d" text-anchor="end" >102,880</text>
<text x="1717.8" y="605.0" font-size="16.5" fill="#3d3d3d" text-anchor="end" >70,305</text>
<text x="1829.5" y="605.0" font-size="16.5" fill="#3d3d3d" text-anchor="end" >32,575</text>
<text x="1944.8" y="605.0" font-size="16.5" fill="#3d3d3d" text-anchor="end" >2,629,627</text>
<text x="2066" y="605.0" font-size="16.5" fill="#3d3d3d" text-anchor="end" >1,817,263</text>
<text x="2183" y="605.0" font-size="16.5" fill="#3d3d3d" text-anchor="end" >812,364</text>
<rect x="1204.5" y="617.2" width="13.4" height="13.2" fill="none" stroke="#8a8a8a" stroke-width="2"/>
<line x1="1207.1" y1="623.8" x2="1215.3000000000002" y2="623.8" stroke="#8a8a8a" stroke-width="1.3"/>
<line x1="1211.2" y1="619.8" x2="1211.2" y2="627.8" stroke="#8a8a8a" stroke-width="1.3"/>
<text x="1234" y="629.2" font-size="16.5" fill="#3d3d3d" textLength="91.6" lengthAdjust="spacingAndGlyphs" >Myynti 3060</text>
<text x="1579.5" y="629.2" font-size="16.5" fill="#3d3d3d" text-anchor="end" >108,400</text>
<text x="1717.8" y="629.2" font-size="16.5" fill="#3d3d3d" text-anchor="end" >126,036</text>
<text x="1829.5" y="629.2" font-size="16.5" fill="#3d3d3d" text-anchor="end" >-17,636</text>
<text x="1944.8" y="629.2" font-size="16.5" fill="#3d3d3d" text-anchor="end" >1,861,272</text>
<text x="2066" y="629.2" font-size="16.5" fill="#3d3d3d" text-anchor="end" >565,180</text>
<text x="2183" y="629.2" font-size="16.5" fill="#3d3d3d" text-anchor="end" >1,296,093</text>
<rect x="1204.5" y="641.4" width="13.4" height="13.2" fill="none" stroke="#8a8a8a" stroke-width="2"/>
<line x1="1207.1" y1="648.0" x2="1215.3000000000002" y2="648.0" stroke="#8a8a8a" stroke-width="1.3"/>
<line x1="1211.2" y1="644.0" x2="1211.2" y2="652.0" stroke="#8a8a8a" stroke-width="1.3"/>
<text x="1234" y="653.4" font-size="16.5" fill="#3d3d3d" textLength="91.6" lengthAdjust="spacingAndGlyphs" >Myynti 3065</text>
<text x="1579.5" y="653.4" font-size="16.5" fill="#3d3d3d" text-anchor="end" >9,911</text>
<text x="1717.8" y="653.4" font-size="16.5" fill="#3d3d3d" text-anchor="end" >1,700</text>
<text x="1829.5" y="653.4" font-size="16.5" fill="#3d3d3d" text-anchor="end" >8,211</text>
<text x="1944.8" y="653.4" font-size="16.5" fill="#3d3d3d" text-anchor="end" >69,744</text>
<text x="2066" y="653.4" font-size="16.5" fill="#3d3d3d" text-anchor="end" >13,682</text>
<text x="2183" y="653.4" font-size="16.5" fill="#3d3d3d" text-anchor="end" >56,062</text>
<rect x="1204.5" y="665.5" width="13.4" height="13.2" fill="none" stroke="#8a8a8a" stroke-width="2"/>
<line x1="1207.1" y1="672.1" x2="1215.3000000000002" y2="672.1" stroke="#8a8a8a" stroke-width="1.3"/>
<line x1="1211.2" y1="668.1" x2="1211.2" y2="676.1" stroke="#8a8a8a" stroke-width="1.3"/>
<text x="1234" y="677.5" font-size="16.5" fill="#3d3d3d" textLength="91.6" lengthAdjust="spacingAndGlyphs" >Myynti 3070</text>
<text x="1579.5" y="677.5" font-size="16.5" fill="#3d3d3d" text-anchor="end" >426,634</text>
<text x="1717.8" y="677.5" font-size="16.5" fill="#3d3d3d" text-anchor="end" >293,343</text>
<text x="1829.5" y="677.5" font-size="16.5" fill="#3d3d3d" text-anchor="end" >133,291</text>
<text x="1944.8" y="677.5" font-size="16.5" fill="#3d3d3d" text-anchor="end" >3,225,837</text>
<text x="2066" y="677.5" font-size="16.5" fill="#3d3d3d" text-anchor="end" >2,699,558</text>
<text x="2183" y="677.5" font-size="16.5" fill="#3d3d3d" text-anchor="end" >526,279</text>
<rect x="1204.5" y="689.7" width="13.4" height="13.2" fill="none" stroke="#8a8a8a" stroke-width="2"/>
<line x1="1207.1" y1="696.3" x2="1215.3000000000002" y2="696.3" stroke="#8a8a8a" stroke-width="1.3"/>
<line x1="1211.2" y1="692.3" x2="1211.2" y2="700.3" stroke="#8a8a8a" stroke-width="1.3"/>
<text x="1234" y="701.7" font-size="16.5" fill="#3d3d3d" textLength="91.6" lengthAdjust="spacingAndGlyphs" >Myynti 3071</text>
<text x="1579.5" y="701.7" font-size="16.5" fill="#3d3d3d" text-anchor="end" >32,979</text>
<text x="1829.5" y="701.7" font-size="16.5" fill="#3d3d3d" text-anchor="end" >32,979</text>
<text x="1944.8" y="701.7" font-size="16.5" fill="#3d3d3d" text-anchor="end" >256,851</text>
<text x="2183" y="701.7" font-size="16.5" fill="#3d3d3d" text-anchor="end" >256,851</text>
<rect x="1204.5" y="713.8" width="13.4" height="13.2" fill="none" stroke="#8a8a8a" stroke-width="2"/>
<line x1="1207.1" y1="720.4" x2="1215.3000000000002" y2="720.4" stroke="#8a8a8a" stroke-width="1.3"/>
<line x1="1211.2" y1="716.4" x2="1211.2" y2="724.4" stroke="#8a8a8a" stroke-width="1.3"/>
<text x="1234" y="725.8" font-size="16.5" fill="#3d3d3d" textLength="91.6" lengthAdjust="spacingAndGlyphs" >Myynti 3075</text>
<text x="1579.5" y="725.8" font-size="16.5" fill="#3d3d3d" text-anchor="end" >45,373</text>
<text x="1717.8" y="725.8" font-size="16.5" fill="#3d3d3d" text-anchor="end" >49,297</text>
<text x="1829.5" y="725.8" font-size="16.5" fill="#3d3d3d" text-anchor="end" >-3,925</text>
<text x="1944.8" y="725.8" font-size="16.5" fill="#3d3d3d" text-anchor="end" >337,685</text>
<text x="2066" y="725.8" font-size="16.5" fill="#3d3d3d" text-anchor="end" >158,945</text>
<text x="2183" y="725.8" font-size="16.5" fill="#3d3d3d" text-anchor="end" >178,740</text>
<rect x="1204.5" y="738.0" width="13.4" height="13.2" fill="none" stroke="#8a8a8a" stroke-width="2"/>
<line x1="1207.1" y1="744.6" x2="1215.3000000000002" y2="744.6" stroke="#8a8a8a" stroke-width="1.3"/>
<line x1="1211.2" y1="740.6" x2="1211.2" y2="748.6" stroke="#8a8a8a" stroke-width="1.3"/>
<text x="1234" y="750.0" font-size="16.5" fill="#3d3d3d" textLength="91.6" lengthAdjust="spacingAndGlyphs" >Myynti 3080</text>
<text x="1579.5" y="750.0" font-size="16.5" fill="#3d3d3d" text-anchor="end" >0</text>
<text x="1717.8" y="750.0" font-size="16.5" fill="#3d3d3d" text-anchor="end" >0</text>
<text x="1829.5" y="750.0" font-size="16.5" fill="#3d3d3d" text-anchor="end" >0</text>
<text x="1944.8" y="750.0" font-size="16.5" fill="#3d3d3d" text-anchor="end" >0</text>
<text x="2066" y="750.0" font-size="16.5" fill="#3d3d3d" text-anchor="end" >-291</text>
<text x="2183" y="750.0" font-size="16.5" fill="#3d3d3d" text-anchor="end" >291</text>
<rect x="1204.5" y="762.2" width="13.4" height="13.2" fill="none" stroke="#8a8a8a" stroke-width="2"/>
<line x1="1207.1" y1="768.8" x2="1215.3000000000002" y2="768.8" stroke="#8a8a8a" stroke-width="1.3"/>
<line x1="1211.2" y1="764.8" x2="1211.2" y2="772.8" stroke="#8a8a8a" stroke-width="1.3"/>
<text x="1234" y="774.2" font-size="16.5" fill="#3d3d3d" textLength="91.6" lengthAdjust="spacingAndGlyphs" >Myynti 3085</text>
<text x="1579.5" y="774.2" font-size="16.5" fill="#3d3d3d" text-anchor="end" >840</text>
<text x="1717.8" y="774.2" font-size="16.5" fill="#3d3d3d" text-anchor="end" >880</text>
<text x="1829.5" y="774.2" font-size="16.5" fill="#3d3d3d" text-anchor="end" >-40</text>
<text x="1944.8" y="774.2" font-size="16.5" fill="#3d3d3d" text-anchor="end" >12,066</text>
<text x="2066" y="774.2" font-size="16.5" fill="#3d3d3d" text-anchor="end" >7,220</text>
<text x="2183" y="774.2" font-size="16.5" fill="#3d3d3d" text-anchor="end" >4,846</text>
<rect x="1204.5" y="786.3" width="13.4" height="13.2" fill="none" stroke="#8a8a8a" stroke-width="2"/>
<line x1="1207.1" y1="792.9" x2="1215.3000000000002" y2="792.9" stroke="#8a8a8a" stroke-width="1.3"/>
<line x1="1211.2" y1="788.9" x2="1211.2" y2="796.9" stroke="#8a8a8a" stroke-width="1.3"/>
<text x="1234" y="798.3" font-size="16.5" fill="#3d3d3d" textLength="91.6" lengthAdjust="spacingAndGlyphs" >Myynti 3090</text>
<text x="1579.5" y="798.3" font-size="16.5" fill="#3d3d3d" text-anchor="end" >0</text>
<text x="1717.8" y="798.3" font-size="16.5" fill="#3d3d3d" text-anchor="end" >-63,012</text>
<text x="1829.5" y="798.3" font-size="16.5" fill="#3d3d3d" text-anchor="end" >63,012</text>
<text x="1944.8" y="798.3" font-size="16.5" fill="#3d3d3d" text-anchor="end" >0</text>
<text x="2066" y="798.3" font-size="16.5" fill="#3d3d3d" text-anchor="end" >1,529,254</text>
<text x="2183" y="798.3" font-size="16.5" fill="#3d3d3d" text-anchor="end" >-1,529,254</text>
<rect x="1178.2" y="810.5" width="13.4" height="13.2" fill="none" stroke="#8a8a8a" stroke-width="2"/>
<line x1="1178.2" y1="817.1" x2="1191.6000000000001" y2="817.1" stroke="#8a8a8a" stroke-width="1.5"/>
<line x1="1184.9" y1="810.5" x2="1184.9" y2="823.7" stroke="#8a8a8a" stroke-width="1.5"/>
<text x="1208" y="822.5" font-size="16.5" fill="#252423" font-weight="bold" textLength="229.6" lengthAdjust="spacingAndGlyphs" >Liiketoiminnan muut tuotot</text>
<text x="1717.8" y="822.5" font-size="16.5" fill="#252423" text-anchor="end" font-weight="bold" >159</text>
<text x="1829.5" y="822.5" font-size="16.5" fill="#252423" text-anchor="end" font-weight="bold" >-159</text>
<text x="1944.8" y="822.5" font-size="16.5" fill="#252423" text-anchor="end" font-weight="bold" >1,643</text>
<text x="2066" y="822.5" font-size="16.5" fill="#252423" text-anchor="end" font-weight="bold" >159</text>
<text x="2183" y="822.5" font-size="16.5" fill="#252423" text-anchor="end" font-weight="bold" >1,483</text>
<rect x="1178.2" y="834.6" width="13.4" height="13.2" fill="none" stroke="#8a8a8a" stroke-width="2"/>
<line x1="1178.2" y1="841.2" x2="1191.6000000000001" y2="841.2" stroke="#8a8a8a" stroke-width="1.5"/>
<line x1="1184.9" y1="834.6" x2="1184.9" y2="847.8" stroke="#8a8a8a" stroke-width="1.5"/>
<text x="1208" y="846.6" font-size="16.5" fill="#252423" font-weight="bold" textLength="180.2" lengthAdjust="spacingAndGlyphs" >Materiaalit ja palvelut</text>
<text x="1579.5" y="846.6" font-size="16.5" fill="#252423" text-anchor="end" font-weight="bold" >-406,236</text>
<text x="1717.8" y="846.6" font-size="16.5" fill="#252423" text-anchor="end" font-weight="bold" >-303,822</text>
<text x="1829.5" y="846.6" font-size="16.5" fill="#252423" text-anchor="end" font-weight="bold" >-102,414</text>
<text x="1944.8" y="846.6" font-size="16.5" fill="#252423" text-anchor="end" font-weight="bold" >-3,554,804</text>
<text x="2066" y="846.6" font-size="16.5" fill="#252423" text-anchor="end" font-weight="bold" >-2,742,355</text>
<text x="2183" y="846.6" font-size="16.5" fill="#252423" text-anchor="end" font-weight="bold" >-812,449</text>
<rect x="1178.2" y="858.8" width="13.4" height="13.2" fill="none" stroke="#8a8a8a" stroke-width="2"/>
<line x1="1178.2" y1="865.4" x2="1191.6000000000001" y2="865.4" stroke="#8a8a8a" stroke-width="1.5"/>
<line x1="1184.9" y1="858.8" x2="1184.9" y2="872.0" stroke="#8a8a8a" stroke-width="1.5"/>
<text x="1208" y="870.8" font-size="16.5" fill="#252423" font-weight="bold" textLength="114.5" lengthAdjust="spacingAndGlyphs" >MYYNTIKATE</text>
<text x="1579.5" y="870.8" font-size="16.5" fill="#252423" text-anchor="end" font-weight="bold" >2,880,865</text>
<text x="1717.8" y="870.8" font-size="16.5" fill="#252423" text-anchor="end" font-weight="bold" >1,850,738</text>
<text x="1829.5" y="870.8" font-size="16.5" fill="#252423" text-anchor="end" font-weight="bold" >1,030,127</text>
<text x="1944.8" y="870.8" font-size="16.5" fill="#252423" text-anchor="end" font-weight="bold" >26,318,346</text>
<text x="2066" y="870.8" font-size="16.5" fill="#252423" text-anchor="end" font-weight="bold" >19,424,765</text>
<text x="2183" y="870.8" font-size="16.5" fill="#252423" text-anchor="end" font-weight="bold" >6,893,581</text>
<rect x="1178.2" y="883.0" width="13.4" height="13.2" fill="none" stroke="#8a8a8a" stroke-width="2"/>
<line x1="1178.2" y1="889.6" x2="1191.6000000000001" y2="889.6" stroke="#8a8a8a" stroke-width="1.5"/>
<line x1="1184.9" y1="883.0" x2="1184.9" y2="896.2" stroke="#8a8a8a" stroke-width="1.5"/>
<text x="1208" y="895.0" font-size="16.5" fill="#252423" font-weight="bold" textLength="133.6" lengthAdjust="spacingAndGlyphs" >Henkilöstökulut</text>
<text x="1579.5" y="895.0" font-size="16.5" fill="#252423" text-anchor="end" font-weight="bold" >-1,929,140</text>
<text x="1717.8" y="895.0" font-size="16.5" fill="#252423" text-anchor="end" font-weight="bold" >-1,565,128</text>
<text x="1829.5" y="895.0" font-size="16.5" fill="#252423" text-anchor="end" font-weight="bold" >-364,012</text>
<text x="1944.8" y="895.0" font-size="16.5" fill="#252423" text-anchor="end" font-weight="bold" >-17,856,067</text>
<text x="2066" y="895.0" font-size="16.5" fill="#252423" text-anchor="end" font-weight="bold" >-11,928,393</text>
<text x="2183" y="895.0" font-size="16.5" fill="#252423" text-anchor="end" font-weight="bold" >-5,927,674</text>
<rect x="1178.2" y="907.1" width="13.4" height="13.2" fill="none" stroke="#8a8a8a" stroke-width="2"/>
<line x1="1178.2" y1="913.7" x2="1191.6000000000001" y2="913.7" stroke="#8a8a8a" stroke-width="1.5"/>
<text x="1208" y="919.1" font-size="16.5" fill="#252423" font-weight="bold" textLength="221.7" lengthAdjust="spacingAndGlyphs" >Liiketoiminnan muut kulut</text>
<text x="1579.5" y="919.1" font-size="16.5" fill="#252423" text-anchor="end" font-weight="bold" >-433,852</text>
<text x="1717.8" y="919.1" font-size="16.5" fill="#252423" text-anchor="end" font-weight="bold" >-210,281</text>
<text x="1829.5" y="919.1" font-size="16.5" fill="#252423" text-anchor="end" font-weight="bold" >-223,570</text>
<text x="1944.8" y="919.1" font-size="16.5" fill="#252423" text-anchor="end" font-weight="bold" >-3,632,242</text>
<text x="2066" y="919.1" font-size="16.5" fill="#252423" text-anchor="end" font-weight="bold" >-2,519,580</text>
<text x="2183" y="919.1" font-size="16.5" fill="#252423" text-anchor="end" font-weight="bold" >-1,112,662</text>
<rect x="1191.5" y="931.3" width="13.4" height="13.2" fill="none" stroke="#8a8a8a" stroke-width="2"/>
<line x1="1191.5" y1="937.9" x2="1204.9" y2="937.9" stroke="#8a8a8a" stroke-width="1.5"/>
<line x1="1198.2" y1="931.3" x2="1198.2" y2="944.5" stroke="#8a8a8a" stroke-width="1.5"/>
<text x="1221" y="943.3" font-size="16.5" fill="#252423" font-weight="bold" textLength="123.7" lengthAdjust="spacingAndGlyphs" >Ajoneuvokulut</text>
<text x="1944.8" y="943.3" font-size="16.5" fill="#252423" text-anchor="end" font-weight="bold" >-1,289</text>
<text x="2183" y="943.3" font-size="16.5" fill="#252423" text-anchor="end" font-weight="bold" >-1,289</text>
<rect x="1191.5" y="955.4" width="13.4" height="13.2" fill="none" stroke="#8a8a8a" stroke-width="2"/>
<line x1="1191.5" y1="962.0" x2="1204.9" y2="962.0" stroke="#8a8a8a" stroke-width="1.5"/>
<line x1="1198.2" y1="955.4" x2="1198.2" y2="968.6" stroke="#8a8a8a" stroke-width="1.5"/>
<text x="1221" y="967.4" font-size="16.5" fill="#252423" font-weight="bold" textLength="90.1" lengthAdjust="spacingAndGlyphs" >Atk-laite ja</text>
<text x="1221" y="990.8" font-size="16.5" fill="#252423" font-weight="bold" textLength="137.6" lengthAdjust="spacingAndGlyphs" >-ohjelmistokulut</text>
<text x="1579.5" y="967.4" font-size="16.5" fill="#252423" text-anchor="end" font-weight="bold" >-91,401</text>
<text x="1717.8" y="967.4" font-size="16.5" fill="#252423" text-anchor="end" font-weight="bold" >39,103</text>
<text x="1829.5" y="967.4" font-size="16.5" fill="#252423" text-anchor="end" font-weight="bold" >-130,504</text>
<text x="1944.8" y="967.4" font-size="16.5" fill="#252423" text-anchor="end" font-weight="bold" >-419,632</text>
<text x="2066" y="967.4" font-size="16.5" fill="#252423" text-anchor="end" font-weight="bold" >-155,908</text>
<text x="2183" y="967.4" font-size="16.5" fill="#252423" text-anchor="end" font-weight="bold" >-263,724</text>
<rect x="1191.5" y="1000.6" width="13.4" height="13.2" fill="none" stroke="#8a8a8a" stroke-width="2"/>
<line x1="1191.5" y1="1007.2" x2="1204.9" y2="1007.2" stroke="#8a8a8a" stroke-width="1.5"/>
<line x1="1198.2" y1="1000.6" x2="1198.2" y2="1013.8" stroke="#8a8a8a" stroke-width="1.5"/>
<text x="1221" y="1012.6" font-size="16.5" fill="#252423" font-weight="bold" textLength="112.9" lengthAdjust="spacingAndGlyphs" >Edustuskulut</text>
<text x="1579.5" y="1012.6" font-size="16.5" fill="#252423" text-anchor="end" font-weight="bold" >-781</text>
<text x="1717.8" y="1012.6" font-size="16.5" fill="#252423" text-anchor="end" font-weight="bold" >-396</text>
<text x="1829.5" y="1012.6" font-size="16.5" fill="#252423" text-anchor="end" font-weight="bold" >-385</text>
<text x="1944.8" y="1012.6" font-size="16.5" fill="#252423" text-anchor="end" font-weight="bold" >-1,925</text>
<text x="2066" y="1012.6" font-size="16.5" fill="#252423" text-anchor="end" font-weight="bold" >-2,837</text>
<text x="2183" y="1012.6" font-size="16.5" fill="#252423" text-anchor="end" font-weight="bold" >912</text>
<rect x="1191.5" y="1024.8" width="13.4" height="13.2" fill="none" stroke="#8a8a8a" stroke-width="2"/>
<line x1="1191.5" y1="1031.4" x2="1204.9" y2="1031.4" stroke="#8a8a8a" stroke-width="1.5"/>
<line x1="1198.2" y1="1024.8" x2="1198.2" y2="1038.0" stroke="#8a8a8a" stroke-width="1.5"/>
<text x="1221" y="1036.8" font-size="16.5" fill="#252423" font-weight="bold" textLength="132.7" lengthAdjust="spacingAndGlyphs" >Hallintopalvelut</text>
<text x="1579.5" y="1036.8" font-size="16.5" fill="#252423" text-anchor="end" font-weight="bold" >-32,673</text>
<text x="1717.8" y="1036.8" font-size="16.5" fill="#252423" text-anchor="end" font-weight="bold" >-15,615</text>
<text x="1829.5" y="1036.8" font-size="16.5" fill="#252423" text-anchor="end" font-weight="bold" >-17,059</text>
<text x="1944.8" y="1036.8" font-size="16.5" fill="#252423" text-anchor="end" font-weight="bold" >-252,936</text>
<text x="2066" y="1036.8" font-size="16.5" fill="#252423" text-anchor="end" font-weight="bold" >-163,385</text>
<text x="2183" y="1036.8" font-size="16.5" fill="#252423" text-anchor="end" font-weight="bold" >-89,551</text>
<rect x="1191.5" y="1048.9" width="13.4" height="13.2" fill="none" stroke="#8a8a8a" stroke-width="2"/>
<line x1="1191.5" y1="1055.5" x2="1204.9" y2="1055.5" stroke="#8a8a8a" stroke-width="1.5"/>
<line x1="1198.2" y1="1048.9" x2="1198.2" y2="1062.1" stroke="#8a8a8a" stroke-width="1.5"/>
<text x="1221" y="1060.9" font-size="16.5" fill="#252423" font-weight="bold" textLength="147.5" lengthAdjust="spacingAndGlyphs" >Markkinointikulut</text>
<text x="1579.5" y="1060.9" font-size="16.5" fill="#252423" text-anchor="end" font-weight="bold" >-5,769</text>
<text x="1717.8" y="1060.9" font-size="16.5" fill="#252423" text-anchor="end" font-weight="bold" >-13,977</text>
<text x="1829.5" y="1060.9" font-size="16.5" fill="#252423" text-anchor="end" font-weight="bold" >8,208</text>
<text x="1944.8" y="1060.9" font-size="16.5" fill="#252423" text-anchor="end" font-weight="bold" >-149,763</text>
<text x="2066" y="1060.9" font-size="16.5" fill="#252423" text-anchor="end" font-weight="bold" >-91,691</text>
<text x="2183" y="1060.9" font-size="16.5" fill="#252423" text-anchor="end" font-weight="bold" >-58,072</text>
<rect x="1191.5" y="1073.1" width="13.4" height="13.2" fill="none" stroke="#8a8a8a" stroke-width="2"/>
<line x1="1191.5" y1="1079.7" x2="1204.9" y2="1079.7" stroke="#8a8a8a" stroke-width="1.5"/>
<line x1="1198.2" y1="1073.1" x2="1198.2" y2="1086.3" stroke="#8a8a8a" stroke-width="1.5"/>
<text x="1221" y="1085.1" font-size="16.5" fill="#252423" font-weight="bold" textLength="93.1" lengthAdjust="spacingAndGlyphs" >Matkakulut</text>
<text x="1579.5" y="1085.1" font-size="16.5" fill="#252423" text-anchor="end" font-weight="bold" >-34,870</text>
<text x="1717.8" y="1085.1" font-size="16.5" fill="#252423" text-anchor="end" font-weight="bold" >-42,575</text>
<text x="1829.5" y="1085.1" font-size="16.5" fill="#252423" text-anchor="end" font-weight="bold" >7,705</text>
<text x="1944.8" y="1085.1" font-size="16.5" fill="#252423" text-anchor="end" font-weight="bold" >-288,555</text>
<text x="2066" y="1085.1" font-size="16.5" fill="#252423" text-anchor="end" font-weight="bold" >-219,073</text>
<text x="2183" y="1085.1" font-size="16.5" fill="#252423" text-anchor="end" font-weight="bold" >-69,481</text>
<rect x="1191.5" y="1097.2" width="13.4" height="13.2" fill="none" stroke="#8a8a8a" stroke-width="2"/>
<line x1="1191.5" y1="1103.8" x2="1204.9" y2="1103.8" stroke="#8a8a8a" stroke-width="1.5"/>
<line x1="1198.2" y1="1097.2" x2="1198.2" y2="1110.4" stroke="#8a8a8a" stroke-width="1.5"/>
<text x="1221" y="1109.2" font-size="16.5" fill="#252423" font-weight="bold" textLength="153.4" lengthAdjust="spacingAndGlyphs" >Muut hallintokulut</text>
<text x="1579.5" y="1109.2" font-size="16.5" fill="#252423" text-anchor="end" font-weight="bold" >-37,124</text>
<text x="1717.8" y="1109.2" font-size="16.5" fill="#252423" text-anchor="end" font-weight="bold" >-18,732</text>
<text x="1829.5" y="1109.2" font-size="16.5" fill="#252423" text-anchor="end" font-weight="bold" >-18,391</text>
<text x="1944.8" y="1109.2" font-size="16.5" fill="#252423" text-anchor="end" font-weight="bold" >-310,971</text>
<text x="2066" y="1109.2" font-size="16.5" fill="#252423" text-anchor="end" font-weight="bold" >-220,048</text>
<text x="2183" y="1109.2" font-size="16.5" fill="#252423" text-anchor="end" font-weight="bold" >-90,924</text>
</g>
<line x1="1450" y1="303" x2="1450" y2="1110" stroke="#505050" stroke-width="1.6"/>
<line x1="1951.3" y1="303" x2="1951.3" y2="1110" stroke="#505050" stroke-width="1.6"/>
<rect x="2183.8" y="339.5" width="10.2" height="493.5" fill="#c8c8c8" />
<rect x="1206" y="1111" width="930" height="11.8" fill="#c8c8c8" />
<polyline points="2185,323 2189,319 2193,323" fill="none" stroke="#666" stroke-width="1.2"/>
<polyline points="2185.5,1091.5 2189.5,1095.5 2193.5,1091.5" fill="none" stroke="#666" stroke-width="1.2"/>
<polyline points="1191,1113 1187,1117 1191,1121" fill="none" stroke="#666" stroke-width="1.2"/>
<polyline points="2164,1113 2168,1117 2164,1121" fill="none" stroke="#666" stroke-width="1.2"/>
<rect x="1163" y="1136.5" width="499.4" height="57.5" rx="4" fill="#c8c8c8"/>
<text x="1410" y="1172" font-size="17" fill="#a6a6a6" text-anchor="middle" textLength="173" lengthAdjust="spacingAndGlyphs" >Valitse analysoitava tili</text>
<rect x="1699" y="1137" width="501" height="57" rx="4" fill="#c8c8c8"/>
<text x="1948" y="1172" font-size="17" fill="#a6a6a6" text-anchor="middle" textLength="237" lengthAdjust="spacingAndGlyphs" >Valitse tutkittavan tilin tositteita</text>
<rect x="0" y="1221" width="2560" height="48" fill="#eaeaea" />
<rect x="289.9" y="1221" width="155.1" height="48" fill="#ffffff" />
<rect x="289.9" y="1265" width="155.1" height="4" fill="#f2c80f" />
<rect x="44.800000000000004" y="1221" width="1.8" height="48" fill="#bdbdbd" />
<rect x="152.7" y="1221" width="1.8" height="48" fill="#bdbdbd" />
<rect x="288.5" y="1221" width="1.8" height="48" fill="#bdbdbd" />
<rect x="444.6" y="1221" width="1.8" height="48" fill="#bdbdbd" />
<rect x="638.0" y="1221" width="1.8" height="48" fill="#bdbdbd" />
<rect x="865.8000000000001" y="1221" width="1.8" height="48" fill="#bdbdbd" />
<rect x="1122.8" y="1221" width="1.8" height="48" fill="#bdbdbd" />
<rect x="1482.5" y="1221" width="1.8" height="48" fill="#bdbdbd" />
<rect x="1717.6999999999998" y="1221" width="1.8" height="48" fill="#bdbdbd" />
<rect x="1938.3" y="1221" width="1.8" height="48" fill="#bdbdbd" />
<rect x="2024.3" y="1221" width="1.8" height="48" fill="#bdbdbd" />
<rect x="2182.7999999999997" y="1221" width="1.8" height="48" fill="#bdbdbd" />
<rect x="2308.1" y="1221" width="1.8" height="48" fill="#bdbdbd" />
<rect x="2478.4" y="1221" width="1.8" height="48" fill="#bdbdbd" />
<text x="99.7" y="1252" font-size="17" fill="#3a3a3a" text-anchor="middle" textLength="53.0" lengthAdjust="spacingAndGlyphs" stroke="#3a3a3a" stroke-width="0.5">Etusivu</text>
<text x="221.5" y="1252" font-size="17" fill="#3a3a3a" text-anchor="middle" textLength="79.0" lengthAdjust="spacingAndGlyphs" stroke="#3a3a3a" stroke-width="0.5">Dashboard</text>
<text x="367.4" y="1252" font-size="17" fill="#3a3a3a" text-anchor="middle" textLength="102.6" lengthAdjust="spacingAndGlyphs" stroke="#3a3a3a" stroke-width="0.5">Tuloslaskelma</text>
<text x="542.2" y="1252" font-size="17" fill="#3a3a3a" text-anchor="middle" textLength="134.7" lengthAdjust="spacingAndGlyphs" stroke="#3a3a3a" stroke-width="0.5">Liikevaihto &amp; Tulos</text>
<text x="752.8" y="1252" font-size="17" fill="#3a3a3a" text-anchor="middle" textLength="172.6" lengthAdjust="spacingAndGlyphs" stroke="#3a3a3a" stroke-width="0.5">Tuloslaskelma per kausi</text>
<text x="995.2" y="1252" font-size="17" fill="#3a3a3a" text-anchor="middle" textLength="199.6" lengthAdjust="spacingAndGlyphs" stroke="#3a3a3a" stroke-width="0.5">Tuloslaskelma per dimensio</text>
<text x="1303.6" y="1252" font-size="17" fill="#3a3a3a" text-anchor="middle" textLength="300.1" lengthAdjust="spacingAndGlyphs" stroke="#3a3a3a" stroke-width="0.5">Tuloslaskelma dimensioittain vs. ed. kausi</text>
<text x="1601.0" y="1252" font-size="17" fill="#3a3a3a" text-anchor="middle" textLength="173.2" lengthAdjust="spacingAndGlyphs" stroke="#3a3a3a" stroke-width="0.5">Liikevaihto per dimensio</text>
<text x="1828.9" y="1252" font-size="17" fill="#3a3a3a" text-anchor="middle" textLength="163.4" lengthAdjust="spacingAndGlyphs" stroke="#3a3a3a" stroke-width="0.5">Liikevaihto per asiakas</text>
<text x="1982.2" y="1252" font-size="17" fill="#3a3a3a" text-anchor="middle" textLength="34.1" lengthAdjust="spacingAndGlyphs" stroke="#3a3a3a" stroke-width="0.5">Tase</text>
<text x="2104.4" y="1252" font-size="17" fill="#3a3a3a" text-anchor="middle" textLength="104.1" lengthAdjust="spacingAndGlyphs" stroke="#3a3a3a" stroke-width="0.5">Tase per kausi</text>
<text x="2246.3" y="1252" font-size="17" fill="#3a3a3a" text-anchor="middle" textLength="68.2" lengthAdjust="spacingAndGlyphs" stroke="#3a3a3a" stroke-width="0.5">Ostovelat</text>
<text x="2394.2" y="1252" font-size="17" fill="#3a3a3a" text-anchor="middle" textLength="111.3" lengthAdjust="spacingAndGlyphs" stroke="#3a3a3a" stroke-width="0.5">Myyntisaamiset</text>
<text x="2506" y="1252" font-size="17" fill="#3a3a3a" textLength="54.8" lengthAdjust="spacingAndGlyphs" stroke="#3a3a3a" stroke-width="0.5">Käyttöp</text>
<polygon points="30.5,1240 36,1245 30.5,1250" fill="#222"/>
<polygon points="5.6,1240 1.4,1245.5 5.6,1251" fill="#cccccc"/></svg></body></html>
